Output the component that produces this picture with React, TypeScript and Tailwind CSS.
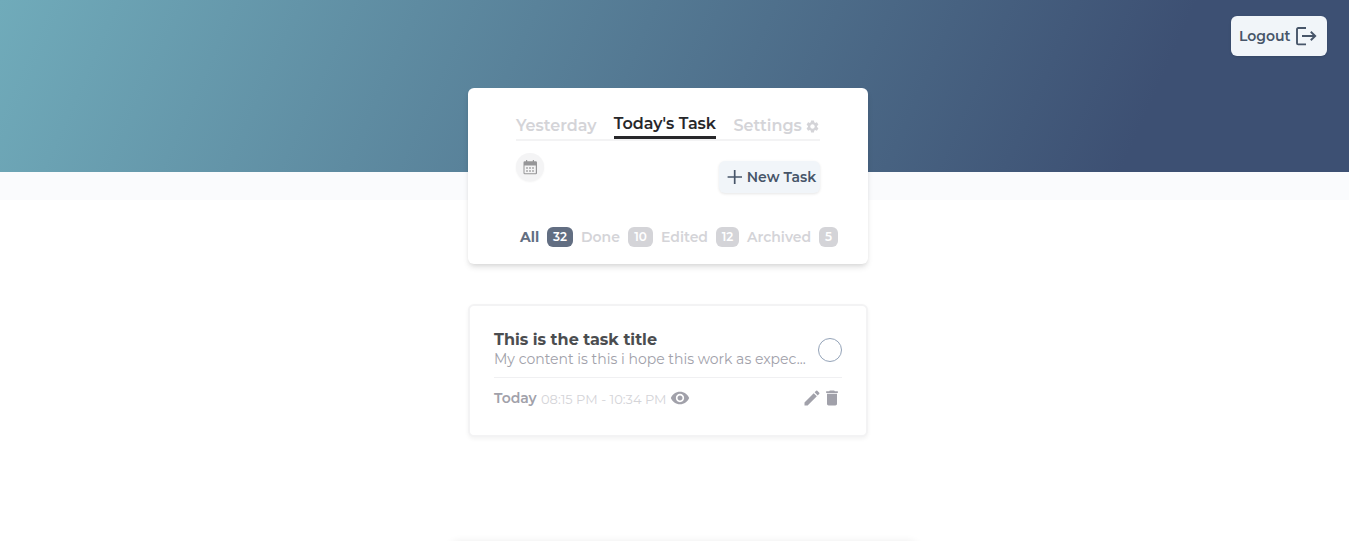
import type { ReactNode } from "react";
import { MdDelete, MdEdit, MdSettings, MdVisibility } from "react-icons/md";

function LogoutIcon() {
  return (
    <svg width="24" height="24" viewBox="0 0 24 24" fill="none" stroke="currentColor" strokeWidth="1.9" className="shrink-0">
      <path d="M12 4H4.200a1.200 1.200 0 0 0-1.200 1.200v14a1.200 1.200 0 0 0 1.200 1.200H12" />
      <path d="M8 12H21M16.800 7.700 21.200 12l-4.400 4.300" />
    </svg>
  );
}

function CalendarIcon() {
  return (
    <svg width="14" height="16" viewBox="0 0 14 16" fill="currentColor">
      <path fillRule="evenodd" d="M3 1h1.200v1.300h5.600V1H11v1.300h1.700A1.300 1.300 0 0 1 14 3.600v10.400a1.300 1.300 0 0 1-1.300 1.300H1.800A1.300 1.300 0 0 1 .5 14V3.600a1.300 1.300 0 0 1 1.300-1.300H3ZM1.500 6.500v7.800h11.300V6.500Z" />
      <path d="M3 8h2v2H3zM6 8h2v2H6zM9 8h2v2H9zM3 11h2v2H3zM6 11h2v2H6zM9 11h2v2H9z" opacity=".6" />
    </svg>
  );
}

function Filter({ label, count, className, badge }: { label: string; count: number; className: string; badge: string }) {
  return (
    <div className="flex items-center gap-2">
      <span className={`whitespace-nowrap text-[14px] leading-5 ${className}`}>{label}</span>
      <span className={`flex h-5 items-center justify-center rounded-md text-[12px] font-semibold text-white ${badge}`}>{count}</span>
    </div>
  );
}

function Card({ children, className }: { children: ReactNode; className: string }) {
  return <section className={`w-[400px] rounded-md bg-white ${className}`}>{children}</section>;
}

export default function App() {
  return (
    <div className="h-[541px] overflow-hidden bg-white font-['Montserrat','Inter',sans-serif]">
      <header className="h-[172px] bg-[linear-gradient(114deg,#70abba_0%,#3d5073_84%)] px-[22px] pt-4">
        <button className="ml-auto flex h-10 w-24 items-center rounded-md bg-[#f1f5f9] pl-[8px] text-[#475569] shadow-sm">
          <span className="w-[53px] whitespace-nowrap text-left text-[14px] font-semibold">Logout</span>
          <span className="ml-[2px]"><LogoutIcon /></span>
        </button>
      </header>
      <div className="h-7 bg-[#fafbfd]" />
      <main className="relative -mt-28 flex flex-col items-center pr-[13px]">
        <Card className="h-44 pt-[24px] pl-12 shadow-[0_4px_6px_-1px_rgba(0,0,0,0.12),0_2px_4px_-1px_rgba(0,0,0,0.06)]">
          <nav className="flex h-[29px] w-[304px] border-b-2 border-[#f3f3f4] text-[16px] leading-6 font-semibold text-[#d4d4d8]">
            <span className="w-[98px] pt-[2px]">Yesterday</span>
            <span className="h-[27px] w-[102px] whitespace-nowrap border-b-[3px] border-[#27272a] text-[#27272a]">Today's Task</span>
            <span className="ml-[17.750px] w-[71.750px] pt-[2px]">Settings</span>
            <MdSettings className="mt-[7px] shrink-0 text-[15px]" />
          </nav>
          <div className="flex w-[304px] justify-between pt-3">
            <button className="flex size-7 items-center justify-center rounded-full bg-[#f4f4f5] text-[#969698] shadow-[0_1px_2px_rgba(0,0,0,0.05)]"><CalendarIcon /></button>
            <button className="mt-2 flex h-8 w-[101px] items-center rounded-md bg-[#f1f5f9] pl-[8px] text-[#475569] shadow-[0_1px_3px_rgba(0,0,0,0.1)]">
              <svg width="15" height="14" viewBox="0 0 15 14" stroke="currentColor" strokeWidth="1.7" className="shrink-0"><path d="M7.700 0v14M.6 7H15" /></svg>
              <span className="ml-[4.750px] whitespace-nowrap text-[14px] font-semibold">New Task</span>
            </button>
          </div>
          <div className="mt-[34px] ml-1 flex gap-2">
            <Filter label="All" count={32} className="w-[19px] font-bold text-[#626e82]" badge="w-[26px] bg-[#626e82]" />
            <Filter label="Done" count={10} className="w-[39px] font-semibold text-[#d4d4d8]" badge="w-[25px] bg-[#d4d4d8]" />
            <Filter label="Edited" count={12} className="w-[47px] font-semibold text-[#d4d4d8]" badge="w-[23px] bg-[#d4d4d8]" />
            <Filter label="Archived" count={5} className="w-[64px] font-semibold text-[#d4d4d8]" badge="w-[19px] bg-[#d4d4d8]" />
          </div>
        </Card>
        <Card className="mt-10 h-[133px] border-2 border-[#f3f3f4] px-6 pt-[22px] shadow-[0_2px_4px_rgba(0,0,0,0.05)]">
          <div className="flex h-[50px] items-start justify-between border-b border-[#f0f0f2]">
            <div>
              <h2 className="text-[16px] leading-6 font-bold text-[#4b4d50]">This is the task title</h2>
              <p className="-mt-[3px] whitespace-nowrap text-[14px] leading-5 font-normal text-[#a1a1aa]">My content is this i hope this work as expec...</p>
            </div>
            <span className="mt-[10px] size-6 shrink-0 rounded-full border border-[#94a3b8]" />
          </div>
          <div className="flex h-[39px] items-center text-[#a1a1aa]">
            <span className="w-[47px] pt-px text-[14px] font-semibold">Today</span>
            <span className="w-[129px] whitespace-nowrap pt-[3.500px] text-[13px] font-normal text-[#d4d4d8]">08:15 PM - 10:34 PM</span>
            <MdVisibility className="text-[20px]" />
            <MdEdit className="ml-auto text-[20px]" />
            <MdDelete className="text-[20px]" />
          </div>
        </Card>
        <div className="mt-[105px] ml-[32px] h-20 w-[472px] shrink-0 rounded-xl bg-white shadow-[0_0_8px_rgba(0,0,0,0.09)]" />
      </main>
    </div>
  );
}
